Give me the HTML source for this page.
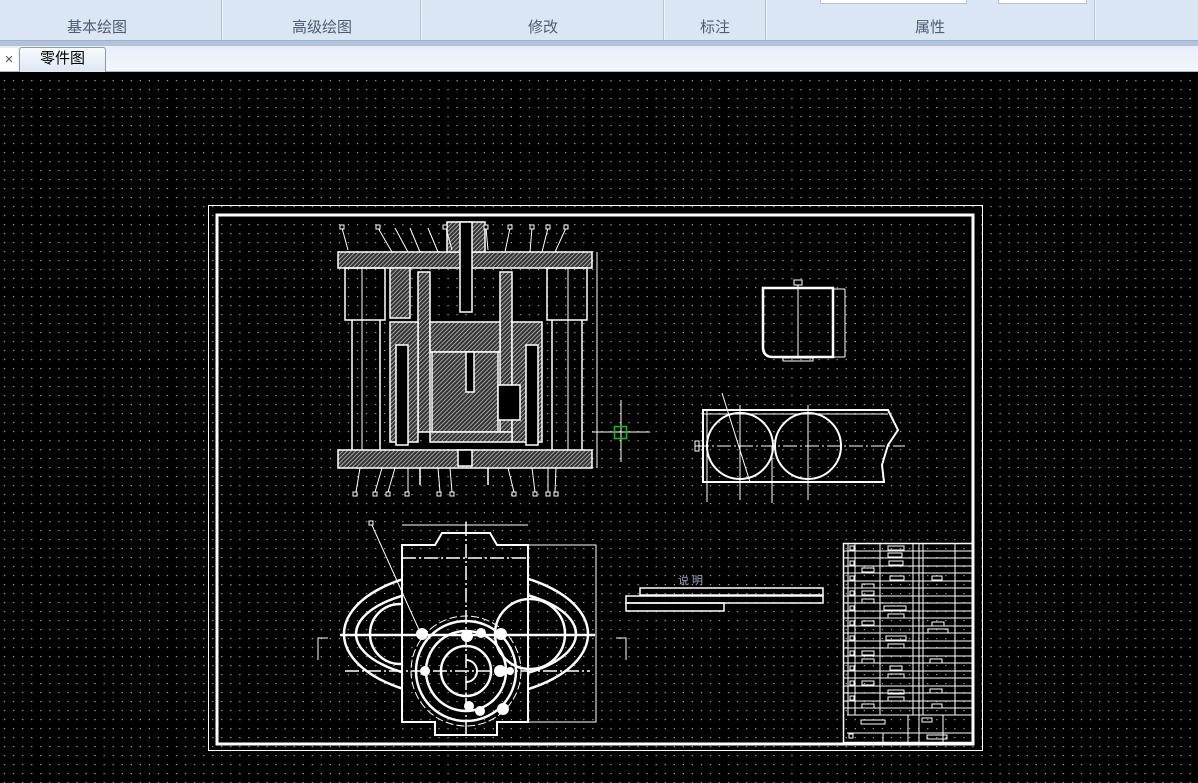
<!DOCTYPE html>
<html><head><meta charset="utf-8"><style>
html,body{margin:0;padding:0;width:1198px;height:783px;overflow:hidden;background:#000;font-family:"Liberation Sans","Noto Sans CJK SC",sans-serif}
#tb{position:absolute;left:0;top:0;width:1198px;height:40px;background:#dbe6f4}
.sep{position:absolute;top:0;width:1px;height:40px;background:#b4c4d8;border-right:1px solid #eef3fa}
.lbl{position:absolute;top:16px;font-size:15px;color:#4d5c72;transform:translateX(-50%);white-space:nowrap}
#bar{position:absolute;left:0;top:40px;width:1198px;height:5px;background:#b3c4da;border-top:1px solid #9fb2cb}
#tabs{position:absolute;left:0;top:46px;width:1198px;height:25px;background:linear-gradient(#e8eef8,#f3f7fc);border-bottom:1px solid #a7b6c9}
#cl{position:absolute;left:0;top:48px;width:18px;height:23px;background:#fff;color:#555;font-size:15px;line-height:24px;text-align:center}
#tab{position:absolute;left:19px;top:47px;width:85px;height:24px;background:linear-gradient(#f9fbfe,#dde7f3);border:1px solid #8a9bb2;border-bottom:none;border-radius:3px 3px 0 0;font-size:15px;text-align:center;line-height:22px;color:#000}
.inp{position:absolute;top:-2px;height:4px;background:#fff;border:1px solid #b4c4d8}
</style></head><body>
<svg width="1198" height="783" style="position:absolute;left:0;top:0" xmlns="http://www.w3.org/2000/svg">
<defs>
<pattern id="d" x="0" y="80" width="9.05" height="9" patternUnits="userSpaceOnUse"><rect x="4" y="0" width="1.2" height="1.2" fill="#a8a8a8"/></pattern>
<pattern id="h" width="3" height="3" patternUnits="userSpaceOnUse" patternTransform="rotate(45)"><rect width="3" height="3" fill="#333"/><line x1="0" y1="0" x2="0" y2="3" stroke="#d0d0d0" stroke-width="1.4"/></pattern>
<clipPath id="cl"><rect x="0" y="0" width="402" height="783"/><rect x="528" y="0" width="700" height="783"/></clipPath>
</defs>
<rect x="0" y="72" width="1198" height="711" fill="#000"/>
<rect x="0" y="76" width="1198" height="707" fill="url(#d)"/>
<g fill="none" stroke="#fff">
<rect x="208.5" y="205.5" width="774" height="545" stroke-width="1"/>
<rect x="217" y="215" width="756" height="529" stroke-width="3"/>

<g stroke-width="1.5">
<rect x="338" y="252" width="254" height="16" fill="url(#h)"/>
<rect x="338" y="450" width="254" height="18" fill="url(#h)"/>
<rect x="447" y="222" width="38" height="30" fill="url(#h)"/>
<rect x="460" y="222" width="12" height="90" fill="#000"/>
<rect x="345" y="268" width="40" height="52"/>
<rect x="547" y="268" width="40" height="52"/>
<line x1="352" y1="320" x2="352" y2="450"/><line x1="380" y1="320" x2="380" y2="450"/>
<line x1="552" y1="320" x2="552" y2="450"/><line x1="582" y1="320" x2="582" y2="450"/>
<line x1="362" y1="268" x2="362" y2="450" stroke-width="1"/><line x1="568" y1="268" x2="568" y2="450" stroke-width="1"/>
<rect x="390" y="268" width="20" height="50" fill="url(#h)"/>
<rect x="418" y="272" width="12" height="160" fill="url(#h)"/>
<rect x="500" y="272" width="12" height="160" fill="url(#h)"/>
<rect x="390" y="322" width="28" height="120" fill="url(#h)"/>
<rect x="512" y="322" width="30" height="120" fill="url(#h)"/>
<rect x="430" y="322" width="70" height="30" fill="url(#h)"/>
<rect x="432" y="352" width="66" height="80" fill="url(#h)"/>
<rect x="466" y="352" width="8" height="40" fill="#000"/>
<rect x="430" y="432" width="82" height="10" fill="url(#h)"/>
<rect x="396" y="345" width="12" height="100" fill="#000"/>
<rect x="526" y="345" width="12" height="100" fill="#000"/>
<rect x="498" y="385" width="22" height="35" fill="#000"/>
<rect x="458" y="450" width="14" height="16" fill="#000"/>
<line x1="420" y1="468" x2="420" y2="485"/><line x1="488" y1="468" x2="488" y2="485"/>
<line x1="597" y1="252" x2="597" y2="468" stroke-width="1"/>
</g>
<g stroke-width="1">
<path d="M342 228 L348 250 M378 228 L392 252 M395 228 L408 252 M410 228 L420 252 M428 228 L438 252 M446 228 L452 250 M486 228 L488 250 M510 228 L505 252 M532 228 L530 252 M548 228 L542 252 M566 228 L555 252"/>
<path d="M356 492 L360 468 M375 492 L382 468 M388 492 L395 468 M408 492 L408 468 M440 492 L438 468 M452 492 L450 468 M514 492 L508 468 M535 492 L532 468 M548 492 L548 468 M555 492 L556 468"/>
<g fill="#000"><rect x="340" y="225" width="4" height="4"/><rect x="376" y="225" width="4" height="4"/><rect x="443" y="225" width="4" height="4"/><rect x="484" y="225" width="4" height="4"/><rect x="508" y="225" width="4" height="4"/><rect x="530" y="225" width="4" height="4"/><rect x="546" y="225" width="4" height="4"/><rect x="564" y="225" width="4" height="4"/>
<rect x="353" y="492" width="4" height="4"/><rect x="373" y="492" width="4" height="4"/><rect x="386" y="492" width="4" height="4"/><rect x="405" y="492" width="4" height="4"/><rect x="437" y="492" width="4" height="4"/><rect x="450" y="492" width="4" height="4"/><rect x="512" y="492" width="4" height="4"/><rect x="533" y="492" width="4" height="4"/><rect x="546" y="492" width="4" height="4"/><rect x="554" y="492" width="4" height="4"/></g>
</g>

<line x1="592" y1="432" x2="650" y2="432" stroke-width="1"/>
<line x1="621" y1="400" x2="621" y2="462" stroke-width="1"/>
<rect x="614.5" y="426.5" width="12" height="12" stroke="#0c0" stroke-width="1.5"/>

<g stroke-width="1.5">
<path d="M402 545 H435 L442 533 H490 L497 545 H528 V722 H497 V735 H435 V722 H402 Z" stroke-width="2"/>
<g clip-path="url(#cl)" stroke-width="2.5">
<ellipse cx="466" cy="634" rx="122" ry="64"/>
<ellipse cx="466" cy="634" rx="110" ry="47"/>
<circle cx="400" cy="634" r="30"/>
</g>
<circle cx="530" cy="634" r="35" stroke-width="2.5"/>
<circle cx="466" cy="671" r="50" stroke-width="2.5"/>
<circle cx="466" cy="671" r="40" stroke-width="2.5"/>
<circle cx="466" cy="671" r="25" stroke-width="2.5"/>
<circle cx="466" cy="671" r="55" stroke-width="1" stroke-dasharray="8 3"/>
<path d="M466 660 A11 11 0 0 1 466 682" stroke-width="2"/>
<line x1="340" y1="635" x2="595" y2="635" stroke-width="2.5"/>
<line x1="345" y1="671" x2="590" y2="671" stroke-dasharray="14 3 2 3"/>
<line x1="466" y1="522" x2="466" y2="735" stroke-dasharray="14 3 2 3"/>
<line x1="402" y1="558" x2="528" y2="558" stroke-dasharray="14 3 2 3"/>
<path d="M402 525 H528 M528 545 H596 V722 H528" stroke-width="1"/>
<path d="M318 660 V638 H328 M626 660 V638 H616" stroke-width="1"/>
<line x1="371" y1="523" x2="420" y2="632" stroke-width="1"/>
<rect x="369" y="521" width="4" height="4" fill="#000" stroke-width="1"/>
<g fill="#fff" stroke="none"><circle cx="422" cy="634" r="6"/><circle cx="501" cy="634" r="6"/><circle cx="467" cy="636" r="6"/><circle cx="481" cy="633" r="5"/><circle cx="425" cy="671" r="5"/><circle cx="500" cy="671" r="6"/><circle cx="510" cy="671" r="4"/><circle cx="469" cy="706" r="5"/><circle cx="480" cy="711" r="5"/><circle cx="503" cy="709" r="6"/></g>
</g>

<g stroke-width="2">
<path d="M763 288 H833 V357 H773 Q763 357 763 347 Z" stroke-width="2.5"/>
<line x1="798" y1="285" x2="798" y2="357" stroke-width="1"/>
<rect x="794" y="280" width="8" height="5" stroke-width="1"/>
<rect x="783" y="358" width="30" height="3" stroke-width="1"/>
<path d="M833 289 H845 M845 289 V357 M833 357 H845" stroke-width="1"/>
<path d="M703 410 H888 L898 430 L888 445 L882 465 L884 482 H703 Z" stroke-width="2"/>
<line x1="703" y1="414" x2="888" y2="414" stroke-width="1"/>
<circle cx="740" cy="446" r="33"/><circle cx="808" cy="446" r="33"/>
<line x1="695" y1="446" x2="905" y2="446" stroke-width="1" stroke-dasharray="14 3 2 3"/>
<line x1="740" y1="405" x2="740" y2="500" stroke-width="1"/><line x1="808" y1="405" x2="808" y2="500" stroke-width="1"/>
<line x1="722" y1="393" x2="750" y2="482" stroke-width="1"/>
<path d="M707 410 V502 M772 446 V503" stroke-width="1"/>
<rect x="695" y="441" width="4" height="10" stroke-width="1"/>
</g>

<rect x="640" y="588" width="183" height="7" stroke-width="1.5"/>
<rect x="626" y="596" width="197" height="7" stroke-width="1.5"/>
<rect x="626" y="603" width="98" height="8" stroke-width="1.5"/>

<g stroke-width="1">
<rect x="843.5" y="543.5" width="129" height="199" stroke-width="1.5"/>
<path d="M848 543 V715 M855 543 V715 M880 543 V715 M913 543 V715 M919 543 V742 M923 543 V715 M955 543 V715 M847 715 H972 M847 733 H972 M908 715 V742 M943 715 V742 M883 733 V742"/>
<path d="M843 551 H972 M843 558 H972 M843 566 H972 M843 573 H972 M843 581 H972 M843 588 H972 M843 596 H972 M843 603 H972 M843 611 H972 M843 618 H972 M843 626 H972 M843 633 H972 M843 641 H972 M843 648 H972 M843 656 H972 M843 663 H972 M843 671 H972 M843 678 H972 M843 686 H972 M843 693 H972 M843 701 H972 M843 708 H972"/>
<path d="M888 546h16v4h-16z M889 561h14v4h-14z M862 568h12v4h-12z M890 576h14v4h-14z M862 584h12v4h-12z M932 576h10v4h-10z M862 599h12v4h-12z M884 606h22v4h-22z M932 622h12v4h-12z M928 629h20v4h-20z M886 636h20v4h-20z M862 651h12v4h-12z M890 666h12v4h-12z M888 690h16v4h-16z M862 704h12v4h-12z M932 704h10v4h-10z M861 720h24v4h-24z M922 718h10v4h-10z M927 735h20v4h-20z M849 734h4v4h-4z"/>
<path d="M888 553h14v4h-14z M862 591h12v4h-12z M888 614h16v4h-16z M862 621h12v4h-12z M888 644h16v4h-16z M862 659h12v4h-12z M930 659h12v4h-12z M888 674h16v4h-16z M862 681h12v4h-12z M888 697h16v4h-16z M930 689h12v4h-12z M850 546h4v4h-4z M850 561h4v4h-4z M850 576h4v4h-4z M850 591h4v4h-4z M850 606h4v4h-4z M850 621h4v4h-4z M850 636h4v4h-4z M850 651h4v4h-4z M850 666h4v4h-4z M850 681h4v4h-4z M850 696h4v4h-4z"/>
</g>
</g>
<text x="678" y="584" fill="#9ab" font-size="11" font-family="Liberation Sans,Noto Sans CJK SC,sans-serif">说 明</text>
</svg>
<div id="tb">
<div class="sep" style="left:221px"></div><div class="sep" style="left:420px"></div><div class="sep" style="left:663px"></div><div class="sep" style="left:765px"></div><div class="sep" style="left:1094px"></div>
<div class="inp" style="left:820px;width:145px"></div><div class="inp" style="left:998px;width:87px"></div>
<div class="lbl" style="left:97px">基本绘图</div><div class="lbl" style="left:322px">高级绘图</div><div class="lbl" style="left:543px">修改</div><div class="lbl" style="left:715px">标注</div><div class="lbl" style="left:930px">属性</div>
</div>
<div id="bar"></div>
<div id="tabs"></div>
<div id="cl">×</div>
<div id="tab">零件图</div>
</body></html>
